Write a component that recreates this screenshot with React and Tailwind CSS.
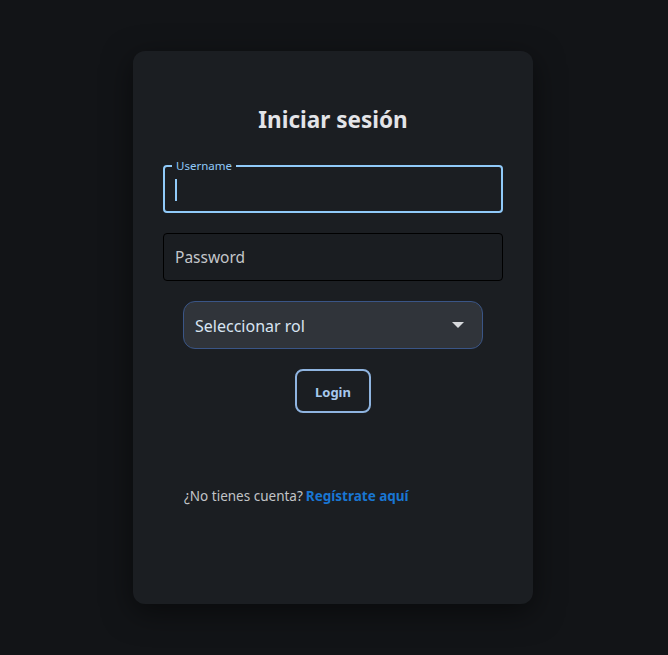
export default function App() {
  return (
    <div className="min-h-[655px] w-full bg-[#121417] flex justify-center pt-[51px]" style={{ fontFamily: '"Noto Sans", "Open Sans", sans-serif' }}>
      <div className="w-[400px] h-[553px] -translate-x-[1px] bg-[#1b1e22] rounded-xl shadow-[0_8px_30px_rgba(0,0,0,0.5)] flex flex-col items-center pt-[53px]">
        <h1 className="text-[22.5px] leading-[32px] font-bold text-[#e3e4e8]">Iniciar sesión</h1>
        <div className="mt-[29px] w-[340px] h-[48px] relative rounded-[4px] border-2 border-[#90caf9] flex items-center px-[11px]">
          <span className="absolute -top-[8px] left-[7px] px-[4px] bg-[#1b1e22] text-[11.5px] leading-[14px] text-[#90caf9]">Username</span>
          <div className="w-[2px] h-[22px] bg-[#90caf9] mt-[1px] -ml-[1px]"></div>
        </div>
        <div className="mt-[20px] w-[340px] h-[48px] rounded-[4px] border border-black flex items-center px-[11px] bg-[#1a1d21]">
          <span className="text-[15.5px] text-[#c4c6ca] mt-[2px]">Password</span>
        </div>
        <div className="mt-[20px] w-[300px] h-[48px] rounded-[12px] border border-[#3a5586] bg-[#30343a] flex items-center justify-between pl-[11px] pr-[18px]">
          <span className="text-[16px] text-[#d8e4f2] mt-[2px]">Seleccionar rol</span>
          <svg width="12" height="6" viewBox="0 0 12 6"><path d="M0 0h12L6 6z" fill="#d7d9dc" /></svg>
        </div>
        <button className="mt-[20px] w-[76px] h-[44px] rounded-[8px] border-2 border-[#8fb4e0] text-[13px] font-bold text-[#a6c8ee] pt-[4px]">Login</button>
        <div className="mt-[72px] self-start ml-[51px] text-[13.5px] flex items-center gap-[3px] pt-[1px]">
          <span className="text-[#c2c4c7]">¿No tienes cuenta?</span>
          <span className="font-bold text-[#1976d2]">Regístrate aquí</span>
        </div>
      </div>
    </div>
  );
}
